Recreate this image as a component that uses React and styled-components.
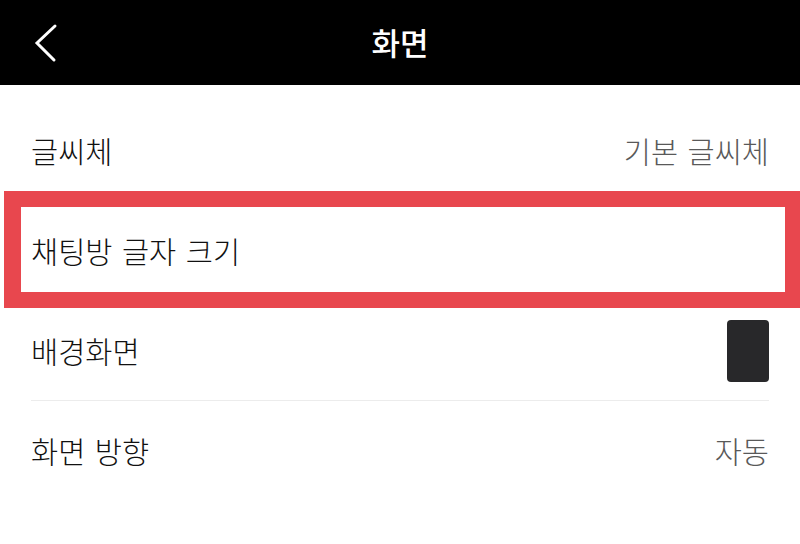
import React from "react";
import styled, { createGlobalStyle } from "styled-components";

const GlobalStyle = createGlobalStyle`
  html, body {
    margin: 0;
    padding: 0;
    background: #fff;
  }
  body {
    font-family: "Noto Sans CJK KR", "Noto Sans", sans-serif;
    color: #111;
  }
`;

const Screen = styled.div`
  width: 800px;
  height: 544px;
  background: #fff;
  overflow: hidden;
`;

const Toolbar = styled.header`
  height: 85px;
  background: #000;
  display: grid;
  grid-template-columns: 1fr auto 1fr;
  align-items: center;
`;

const BackButton = styled.button`
  justify-self: start;
  margin-left: 34px;
  padding: 0;
  border: 0;
  background: none;
  display: flex;
  align-items: center;
  cursor: pointer;
`;

const Title = styled.h1`
  margin: 0;
  color: #fff;
  font-size: 31px;
  font-weight: 500;
  line-height: 1;
  padding-bottom: 2px;
`;

const List = styled.ul`
  list-style: none;
  margin: 0;
  padding: 16px 0 0;
`;

const Row = styled.li`
  position: relative;
  height: 100px;
  margin: 0 31px;
  display: flex;
  align-items: center;
  justify-content: space-between;
  border-bottom: ${(p) => (p.$last ? "none" : "1px solid #ececec")};
  box-sizing: border-box;
`;

const Label = styled.span`
  position: relative;
  font-size: 29.5px;
  font-weight: 300;
  line-height: 1;
  color: #111;
  word-spacing: 3px;
`;

const Value = styled.span`
  font-size: 29.5px;
  font-weight: 300;
  line-height: 1;
  color: #595959;
  word-spacing: 3px;
`;

const Wallpaper = styled.div`
  width: 42px;
  height: 62px;
  border-radius: 4px;
  background: #28282a;
`;

const Highlight = styled.div`
  position: absolute;
  top: -10px;
  bottom: -8px;
  left: -27px;
  right: -31px;
  border-style: solid;
  border-color: #e8474e;
  border-width: 16px 15px 16px 17px;
  background: #fff;
`;

const Chevron = () => (
  <svg width="24" height="40" viewBox="0 0 24 40" fill="none">
    <polyline
      points="21,3 3,20 20,37"
      stroke="#fff"
      strokeWidth="3"
      strokeLinecap="round"
      strokeLinejoin="miter"
    />
  </svg>
);

const rows = [
  { label: "글씨체", value: "기본 글씨체" },
  { label: "채팅방 글자 크기", highlight: true },
  { label: "배경화면", wallpaper: true },
  { label: "화면 방향", value: "자동", last: true },
];

export default function App() {
  return (
    <>
      <GlobalStyle />
      <Screen>
        <Toolbar>
          <BackButton aria-label="뒤로">
            <Chevron />
          </BackButton>
          <Title>화면</Title>
          <span />
        </Toolbar>
        <List>
          {rows.map((row) => (
            <Row key={row.label} $last={row.last}>
              {row.highlight && <Highlight />}
              <Label>{row.label}</Label>
              {row.value && <Value>{row.value}</Value>}
              {row.wallpaper && <Wallpaper />}
            </Row>
          ))}
        </List>
      </Screen>
    </>
  );
}
